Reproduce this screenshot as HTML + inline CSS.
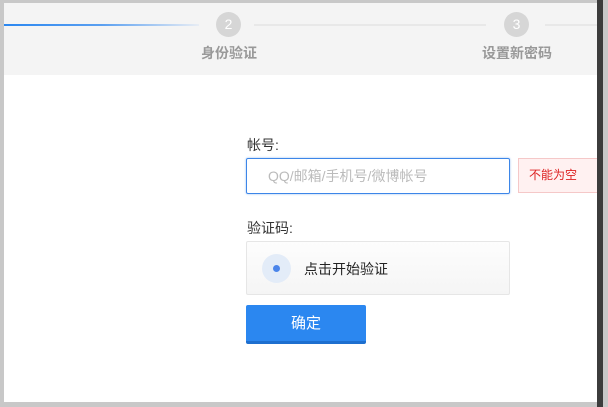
<!DOCTYPE html>
<html><head><meta charset="utf-8"><style>
*{margin:0;padding:0;box-sizing:border-box}
body{width:608px;height:407px;position:relative;overflow:hidden;background:#c8c8c8;font-family:"Liberation Sans","Noto Sans CJK SC",sans-serif}
.main{position:absolute;left:4px;top:3px;width:594px;height:399px;background:#fff}
.hdr{position:absolute;left:0;top:0;width:594px;height:72px;background:#f4f4f4}
.bar{position:absolute;right:5px;top:0;width:6px;height:407px;background:#3c3c3c}
.line{position:absolute;height:2px;top:21px}
.circ{position:absolute;width:25px;height:25px;border-radius:50%;background:#d6d6d6;color:#fff;font-size:14px;text-align:center;line-height:25px;top:9px}
.st{position:absolute;top:40px;font-size:14px;color:#999;font-weight:bold}
.abs{position:absolute}
</style></head><body>
<div class="main">
<div class="hdr">
<div class="line" style="left:0;width:195px;background:linear-gradient(90deg,#2b87f0 0%,#5a9ff0 50%,rgba(220,230,245,0.5) 100%)"></div>
<div class="circ" style="left:212px">2</div>
<div class="line" style="left:250px;width:232px;background:#e8e8e8"></div>
<div class="circ" style="left:500px">3</div>
<div class="line" style="left:541px;width:53px;background:#e8e8e8"></div>
<div class="st" style="left:197px">身份验证</div>
<div class="st" style="left:478px">设置新密码</div>
</div>
<div class="abs" style="left:243px;top:132px;font-size:14px;color:#333">帐号:</div>
<div class="abs" style="left:242px;top:155px;width:264px;height:36px;border:1px solid #3d86e8;border-radius:2px;box-shadow:0 0 2px #9cc0f0;font-size:14px;color:#bbb;padding-left:21px;line-height:34px">QQ/邮箱/手机号/微博帐号</div>
<div class="abs" style="left:514px;top:155px;width:84px;height:35px;border:1px solid #f5c8c8;background:#fff1f1;color:#d22;font-size:12px;line-height:33px;padding-left:10px">不能为空</div>
<div class="abs" style="left:243px;top:215px;font-size:14px;color:#333">验证码:</div>
<div class="abs" style="left:242px;top:238px;width:264px;height:54px;border:1px solid #e6e6e6;border-radius:2px;background:linear-gradient(#fdfdfd,#f5f5f5)">
<div class="abs" style="left:15px;top:12px;width:29px;height:29px;border-radius:50%;background:#e3ecf8"></div>
<div class="abs" style="left:26px;top:23px;width:7px;height:7px;border-radius:50%;background:#4b85ea"></div>
<div class="abs" style="left:57px;top:17px;font-size:14px;color:#222">点击开始验证</div>
</div>
<div class="abs" style="left:242px;top:302px;width:120px;height:39px;background:#2b87f0;border-bottom:3px solid #1e6fcf;border-radius:2px;color:#fff;font-size:15px;text-align:center;line-height:38px">确定</div>
</div>
<div class="bar"></div>
</body></html>
